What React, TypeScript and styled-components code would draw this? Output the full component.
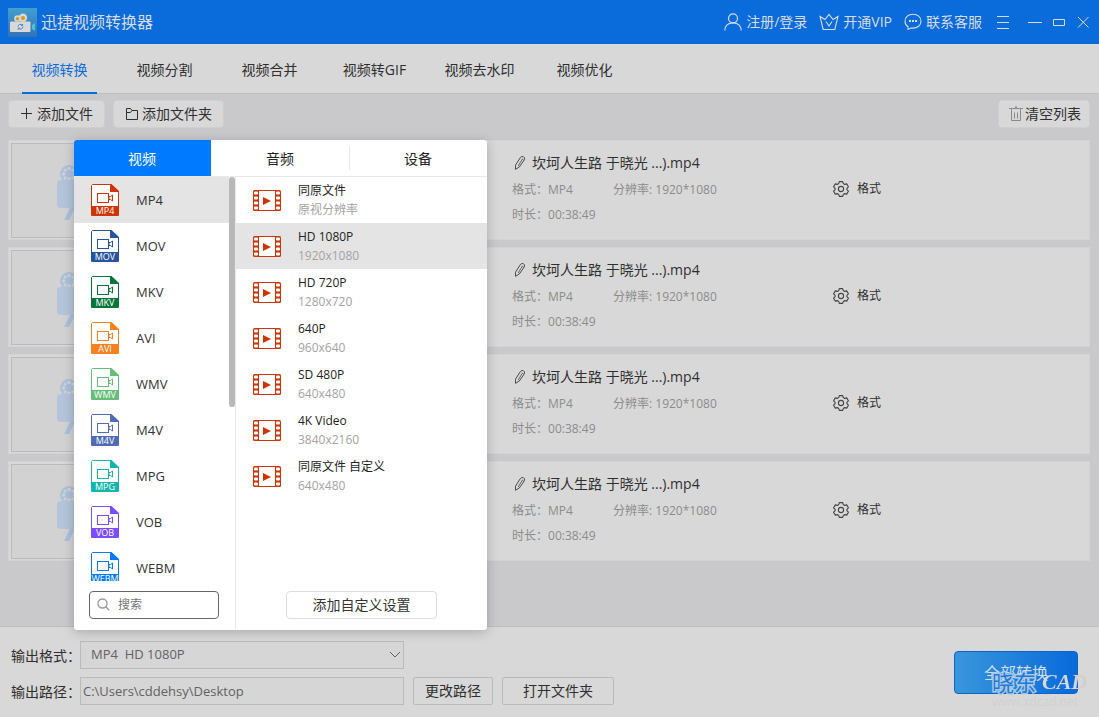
import React from "react";
import styled, { createGlobalStyle, css } from "styled-components";

const font = `"Open Sans", "Noto Sans CJK SC", sans-serif`;

const GlobalStyle = createGlobalStyle`
  *, *::before, *::after { box-sizing: border-box; }
  html, body, #root { height: 100%; }
  body { margin: 0; background: #c9c9cb; color: #2f2f2f; font-family: ${font}; font-size: 14px; line-height: 20px; }
  button, input, select { font: inherit; color: inherit; margin: 0; }
  button { cursor: pointer; padding: 0; border: 0; background: none; white-space: nowrap; }
  svg { display: block; flex: none; }
`;

const Window = styled.div`
  display: flex;
  flex-direction: column;
  min-height: 100vh;
`;

/* ---------- title bar ---------- */

const TitleBar = styled.header`
  display: flex;
  align-items: center;
  height: 44px;
  padding: 0 9px 0 8px;
  background: #096cda;
  color: #d8dbe0;
`;

const Brand = styled.h1`
  display: flex;
  align-items: center;
  gap: 4px;
  margin: 0 auto 0 0;
  font-size: 16px;
  font-weight: 400;
  line-height: 24px;
`;

const HeaderActions = styled.nav`
  display: flex;
  align-items: center;
  gap: 12px;
`;

const HeaderLink = styled.button`
  display: flex;
  align-items: center;
  gap: 4px;
`;

const WindowControls = styled.div`
  display: flex;
  align-items: center;
  gap: 10px;
  margin-left: 14px;
`;

const MenuControl = styled.button`
  margin-right: 8px;
`;

/* ---------- tabs and toolbar ---------- */

const Tabs = styled.nav`
  display: flex;
  height: 50px;
  padding-left: 7px;
  background: #d8d8d8;
  border-bottom: 1px solid #bebebf;
`;

const Tab = styled.button<{ $active?: boolean }>`
  width: 105px;
  height: 50px;
  padding-top: 2px;
  color: ${(p) => (p.$active ? "#0a6cda" : "inherit")};
  display: flex;
  flex-direction: column;
  align-items: center;
  justify-content: space-between;

  &::before { content: ""; height: 2px; }
  &::after {
    content: "";
    width: 75px;
    height: 2px;
    background: ${(p) => (p.$active ? "#0a6cda" : "transparent")};
  }
`;

const Toolbar = styled.div`
  display: flex;
  align-items: center;
  gap: 8px;
  padding: 6px 9px 12px 8px;
`;

const ToolButton = styled.button<{ $end?: boolean }>`
  display: flex;
  align-items: center;
  gap: ${(p) => (p.$end ? 2 : 4)}px;
  height: 28px;
  padding: 0 ${(p) => (p.$end ? 8 : 11)}px 0 ${(p) => (p.$end ? 10 : 12)}px;
  margin-left: ${(p) => (p.$end ? "auto" : "0")};
  border: 1px solid #cfcfd0;
  border-radius: 4px;
  background: #d8d8d8;
`;

/* ---------- file list ---------- */

const FileList = styled.ul`
  flex: 1;
  display: flex;
  flex-direction: column;
  gap: 7px;
  margin: 0;
  padding: 0 9px 16px 8px;
  list-style: none;
`;

const FileCard = styled.li`
  display: grid;
  grid-template-columns: 504px 321px 1fr;
  height: 100px;
  background: #d8d8d8;
  box-shadow: 0 0 0 1px #d3d3d4 inset;
`;

const Thumb = styled.div`
  display: flex;
  align-items: center;
  justify-content: center;
  width: 134px;
  height: 95px;
  margin: 3px;
  padding-top: 4px;
  border: 1px solid #bbbbbc;
  background: #d2d2d3;
`;

const FileInfo = styled.div`
  padding-top: 13px;
`;

const FileName = styled.h2`
  display: flex;
  align-items: center;
  gap: 5px;
  margin: 0 0 8px 1px;
  font-size: 14px;
  font-weight: 400;
  line-height: 20px;
`;

const Facts = styled.dl`
  display: grid;
  grid-template-columns: 101px 1fr;
  row-gap: 7px;
  margin: 0;
  color: #8c8c8c;
  font-size: 12px;
  line-height: 18px;
`;

const Fact = styled.div`
  display: flex;
  white-space: pre;
  dt, dd { margin: 0; }
`;

const FormatButton = styled.button`
  display: flex;
  align-items: center;
  gap: 8px;
  align-self: start;
  justify-self: start;
  margin-top: 39px;
  font-size: 12px;
`;

/* ---------- output bar ---------- */

const OutputBar = styled.footer`
  display: flex;
  justify-content: space-between;
  align-items: center;
  min-height: 91px;
  padding: 2px 21px 0 11px;
  background: #d8d8d8;
  border-top: 1px solid #bebebf;
`;

const OutputForm = styled.div`
  display: flex;
  flex-direction: column;
  gap: 8px;
`;

const OutputRow = styled.div`
  display: flex;
  align-items: center;
`;

const OutputLabel = styled.label`
  width: 69px;
  padding-top: 2px;
  white-space: nowrap;
`;

const Field = styled.div`
  position: relative;
  width: 324px;
  margin-right: 9px;
  color: #626262;
`;

const fieldBox = css`
  display: block;
  width: 100%;
  height: 28px;
  border: 1px solid #bbbbbb;
  border-radius: 0;
  background: #d6d6d6;
  font-size: 13px;
  outline: none;
`;

const FormatSelect = styled.select`
  ${fieldBox}
  appearance: none;
  padding: 0 24px 2px 10px;
`;

const PathInput = styled.input`
  ${fieldBox}
  padding: 0 2px;
`;

const SelectArrow = styled.span`
  position: absolute;
  right: 3px;
  top: 10px;
  pointer-events: none;
`;

const PathButton = styled.button`
  height: 28px;
  margin-right: 9px;
  padding: 0 11px;
  border: 1px solid #bbbbbb;
  border-radius: 2px;

  & + & { padding: 0 20px; }
`;

const ConvertArea = styled.div`
  position: relative;
`;

const ConvertButton = styled.button`
  display: block;
  width: 124px;
  height: 43px;
  margin-bottom: 1px;
  border: 1px solid #0c64c4;
  border-radius: 4px;
  background: linear-gradient(90deg, #3a96db, #0a6cda 95%);
  color: #d4dde6;
  font-size: 16px;
`;

const Watermark = styled.div`
  position: absolute;
  left: 38px;
  top: 18px;
  width: 96px;
  pointer-events: none;
  line-height: 26px;
  white-space: nowrap;
`;

const MarkLine = styled.div`
  display: flex;
  gap: 6px;
`;

const MarkName = styled.span`
  font-size: 22px;
  color: #1c7bda;
  -webkit-text-stroke: 3px #a9c8e6;
  paint-order: stroke fill;
`;

const MarkScript = styled.span`
  font-family: "Liberation Serif", serif;
  font-size: 22px;
  font-style: italic;
  font-weight: 700;
  background: linear-gradient(90deg, #d8d8d8 34px, #cfcfcf 34px);
  background-clip: text;
  -webkit-background-clip: text;
  color: transparent;
`;

const MarkUrl = styled.div`
  font-size: 12px;
  line-height: 14px;
  color: #d0d0d0;
`;

/* ---------- format popup ---------- */

const Popup = styled.section`
  position: absolute;
  z-index: 2;
  left: -6px;
  bottom: 39px;
  display: flex;
  flex-direction: column;
  width: 413px;
  height: 490px;
  border-radius: 3px;
  overflow: hidden;
  background: #ffffff;
  color: #333333;
  box-shadow: 0 2px 12px rgba(0, 0, 0, 0.22);
`;

const PopupTabs = styled.div`
  display: grid;
  grid-template-columns: 137px 139px 1fr;
  height: 37px;
  border-bottom: 1px solid #e8e8e8;
`;

const PopupTab = styled.button<{ $active?: boolean; $divided?: boolean }>`
  display: flex;
  align-items: center;
  background: ${(p) => (p.$active ? "#007bff" : "transparent")};
  color: ${(p) => (p.$active ? "#ffffff" : "#222222")};

  span {
    flex: 1;
    padding-top: 2px;
    line-height: 22px;
    border-right: 1px solid ${(p) => (p.$divided ? "#e8e8e8" : "transparent")};
  }
`;

const PopupBody = styled.div`
  flex: 1;
  display: grid;
  grid-template-columns: 162px 1fr;
  min-height: 0;
`;

const Pane = styled.div<{ $ruled?: boolean }>`
  display: flex;
  flex-direction: column;
  min-width: 0;
  min-height: 0;
  padding-bottom: 11px;
  border-right: ${(p) => (p.$ruled ? "1px solid #e8e8e8" : "0")};
`;

const PaneScroll = styled.div`
  display: flex;
  height: 404px;
  margin-bottom: 10px;
  overflow: hidden;
`;

const Options = styled.div`
  flex: 1;
  min-width: 0;
`;

const ScrollThumb = styled.div`
  width: 6px;
  height: 230px;
  border-radius: 3px;
  background: #b8b8b8;
`;

const Option = styled.button<{ $active?: boolean }>`
  display: flex;
  align-items: center;
  gap: 17px;
  width: 100%;
  height: 46px;
  padding-left: 17px;
  text-align: left;
  font-size: 13px;
  background: ${(p) => (p.$active ? "#e4e4e4" : "transparent")};
`;

const Preset = styled.span`
  display: flex;
  flex-direction: column;
  font-size: 12px;
  line-height: 19px;
  color: #222222;
  small { font-size: 12px; color: #a3a3a3; }
`;

const SearchBox = styled.label`
  display: flex;
  align-items: center;
  gap: 8px;
  width: 130px;
  height: 28px;
  margin-left: 15px;
  padding: 0 7px;
  border: 1px solid #666666;
  border-radius: 4px;

  input {
    flex: 1;
    min-width: 0;
    padding: 0;
    border: 0;
    outline: 0;
    background: none;
    font-size: 12px;
  }
  input::placeholder { color: #757575; opacity: 1; }
`;

const CustomButton = styled.button`
  align-self: center;
  width: 151px;
  height: 28px;
  border: 1px solid #dddddd;
  border-radius: 4px;
`;

/* ---------- drawings ---------- */

const AppLogo = () => (
  <svg width="29" height="29" viewBox="0 0 29 29" aria-hidden="true">
    <defs>
      <linearGradient id="logo" x1="0" y1="0" x2="0" y2="1">
        <stop offset="0" stopColor="#419fd0" />
        <stop offset="1" stopColor="#3271b9" />
      </linearGradient>
    </defs>
    <rect width="29" height="29" fill="url(#logo)" />
    <circle cx="9.5" cy="10.5" r="3.3" fill="#d8d8d8" />
    <circle cx="15" cy="9.8" r="4.2" fill="#d8d8d8" />
    <circle cx="9.5" cy="10.7" r="1.7" fill="#d79a1c" />
    <circle cx="15" cy="10" r="2" fill="#d79a1c" />
    <rect x="2" y="13.5" width="20.5" height="10.5" rx="1" fill="#d8d8d8" />
    <path d="M24 17l3-2v8l-3-2z" fill="#4cc5c9" />
    <path d="M10 18.700a2.400 2.400 0 0 1 4.300-1.400M14.800 18.600a2.400 2.400 0 0 1-4.300 1.600M14.600 16v1.500h-1.500M10.200 21.700v-1.500h1.500" fill="none" stroke="#3b7fbd" strokeWidth=".9" />
  </svg>
);

const UserIcon = () => (
  <svg width="18" height="18" viewBox="0 0 18 18" fill="none" stroke="currentColor" strokeWidth="1.2">
    <circle cx="9" cy="5.3" r="4.5" />
    <path d="M.8 17.5C1 12.500 4.500 9.800 9 9.800s8 2.700 8.200 7.700" />
  </svg>
);

const CrownIcon = () => (
  <svg width="20" height="18" viewBox="0 0 20 18" fill="none" stroke="currentColor" strokeWidth="1.1">
    <path d="M4.200 16.500L1 3.500l5 3L10 1.500l4 5 5-3-3.200 13z" />
    <path d="M7 8.500l3 4.500 3-4.500" />
  </svg>
);

const ChatIcon = () => (
  <svg width="18" height="18" viewBox="0 0 18 18" fill="none" stroke="currentColor" strokeWidth="1.100">
    <path d="M4 16.500v-2.700C2 12.600 1 10.400 1 8.200 1 4 4.500 1.200 9 1.200s8 2.800 8 7-3.500 6.900-8 6.900H7z" />
    <g fill="currentColor" stroke="none">
      <rect x="5" y="7" width="2" height="2" />
      <rect x="8" y="7" width="2" height="2" />
      <rect x="11" y="7" width="2" height="2" />
    </g>
  </svg>
);

const LineIcon = ({ d, w = 14, h = 14 }: { d: string; w?: number; h?: number }) => (
  <svg width={w} height={h} viewBox={`0 0 ${w} ${h}`} fill="none" stroke="currentColor" aria-hidden="true">
    <path d={d} />
  </svg>
);

const FolderIcon = () => (
  <svg width="12" height="16" viewBox="0 0 12 16" fill="none" stroke="currentColor">
    <path d="M.5 13.500v-11h4l1.500 2h5.500v9z" />
    <path d="M.5 6.500h4l1.500-2" />
  </svg>
);

const TrashIcon = () => (
  <svg width="14" height="16" viewBox="0 0 14 16" fill="none" stroke="#8b8b8b">
    <path d="M0 2.500h14M2.500 3v11.500h9V3M5.500 6.500v6M8.500 6.500v6" />
    <path d="M6 1.500h2" strokeWidth="2" />
  </svg>
);

const PencilIcon = () => (
  <svg width="14" height="16" viewBox="0 0 14 16" fill="none" stroke="#4a4a4a">
    <path d="M2.500 14.300V10.200L7.300 2.600Q8.700.9 10.400 1.700t1 3L6.300 12z" />
    <path d="M8.600 4.300q1.500-.6 2 1.200M8.800 5L5.200 11" strokeWidth=".8" />
  </svg>
);

const GearIcon = () => (
  <svg width="16" height="16" viewBox="0 0 16 16" fill="none" stroke="#444444" strokeWidth="1.100" strokeLinejoin="round">
    <path d="M6.300.6h3.400l.6 2 1.400.8 2-.5 1.700 2.900-1.500 1.500v1.400l1.500 1.500-1.700 2.900-2-.5-1.400.8-.6 2H6.300l-.6-2-1.400-.8-2 .5L.6 10.200l1.500-1.500V7.300L.6 5.800l1.700-2.900 2 .5 1.400-.8z" />
    <circle cx="8" cy="8" r="2.600" />
  </svg>
);

const CameraArt = () => (
  <svg width="42" height="56" viewBox="0 0 42 56" fill="#abc0dc" aria-hidden="true">
    {[12, 30].map((cx) => (
      <g key={cx}>
        <circle cx={cx} cy="9" r="9" />
        <g fill="#d2d2d3">
          <circle cx={cx} cy="3.500" r="1.700" />
          <circle cx={cx} cy="14" r="1.700" />
          <circle cx={cx - 5.4} cy="9" r="1.700" />
          <circle cx={cx + 5.4} cy="9" r="1.700" />
          <circle cx={cx - 3.9} cy="5.100" r="1.600" />
          <circle cx={cx + 3.9} cy="5.100" r="1.600" />
          <circle cx={cx - 3.9} cy="12.900" r="1.600" />
          <circle cx={cx + 3.9} cy="12.900" r="1.600" />
        </g>
      </g>
    ))}
    <rect x="0" y="15" width="42" height="28" rx="4" fill="#b4c4da" />
    <path d="M13 43h5l-6 12H7zM29 43h-5l6 12h5z" />
  </svg>
);

const FormatIcon = ({ name, color }: { name: string; color: string }) => (
  <svg width="28" height="32" viewBox="0 0 28 32" aria-hidden="true">
    <path d="M1.500.5h18l8 7.500v23h-27V1.500z" fill="#fff" stroke={color} />
    <path d="M19 0h1.500L28 7v1h-9z" fill={color} />
    <path d="M0 22h28v8.500q0 1.500-1.500 1.500h-25Q0 32 0 30.500z" fill={color} />
    <rect x="6.500" y="9.500" width="11" height="9" fill="none" stroke={color} />
    <path d="M18 12.500h1.500l2-1.500v6l-2-1.500H18z" fill="none" stroke={color} />
    <text x="14" y="30" textAnchor="middle" fontSize="9" fill="#fff" fontFamily={font}>
      {name}
    </text>
  </svg>
);

const FilmIcon = () => (
  <svg width="28" height="21" viewBox="0 0 28 21" aria-hidden="true">
    <rect width="28" height="21" rx="1.500" fill="#cf3404" />
    <rect x="6" y="1" width="16" height="19" fill="#fff" />
    {[1, 6, 11, 16].map((y) => (
      <g key={y} fill="#fff">
        <rect x="1" y={y + 0.5} width="4" height="3" rx="1" />
        <rect x="23" y={y + 0.5} width="4" height="3" rx="1" />
      </g>
    ))}
    <path d="M10 7l8 4-8 4z" fill="#cf3404" />
  </svg>
);

const SearchIcon = () => (
  <svg width="13" height="15" viewBox="0 0 13 15" fill="none" stroke="#999999" strokeWidth="1.400">
    <circle cx="5.500" cy="5.500" r="4.500" />
    <path d="M8.800 8.800l3.400 3.400" />
  </svg>
);

/* ---------- data ---------- */

const tabs = ["视频转换", "视频分割", "视频合并", "视频转GIF", "视频去水印", "视频优化"];

const formats = [
  ["MP4", "#cf3404"],
  ["MOV", "#27559b"],
  ["MKV", "#04763a"],
  ["AVI", "#f5821f"],
  ["WMV", "#66bd79"],
  ["M4V", "#4f6cb5"],
  ["MPG", "#15b5ab"],
  ["VOB", "#7c4dff"],
  ["WEBM", "#007bff"],
];

const presets = [
  ["同原文件", "原视分辨率"],
  ["HD 1080P", "1920x1080"],
  ["HD 720P", "1280x720"],
  ["640P", "960x640"],
  ["SD 480P", "640x480"],
  ["4K Video", "3840x2160"],
  ["同原文件 自定义", "640x480"],
];

const files = [1, 2, 3, 4];

/* ---------- page ---------- */

const FormatPopup = () => (
  <Popup aria-label="输出格式">
    <PopupTabs>
      <PopupTab $active><span>视频</span></PopupTab>
      <PopupTab $divided><span>音频</span></PopupTab>
      <PopupTab><span>设备</span></PopupTab>
    </PopupTabs>
    <PopupBody>
      <Pane $ruled>
        <PaneScroll>
          <Options>
            {formats.map(([name, color], i) => (
              <Option key={name} $active={i === 0}>
                <FormatIcon name={name} color={color} />
                {name}
              </Option>
            ))}
          </Options>
          <ScrollThumb />
        </PaneScroll>
        <SearchBox>
          <SearchIcon />
          <input type="text" placeholder="搜索" aria-label="搜索" />
        </SearchBox>
      </Pane>
      <Pane>
        <PaneScroll>
          <Options>
            {presets.map(([name, size], i) => (
              <Option key={name} $active={i === 1}>
                <FilmIcon />
                <Preset>
                  {name}
                  <small>{size}</small>
                </Preset>
              </Option>
            ))}
          </Options>
        </PaneScroll>
        <CustomButton>添加自定义设置</CustomButton>
      </Pane>
    </PopupBody>
  </Popup>
);

export default function App() {
  return (
    <Window>
      <GlobalStyle />
      <TitleBar>
        <Brand><AppLogo />迅捷视频转换器</Brand>
        <HeaderActions>
          <HeaderLink><UserIcon />注册/登录</HeaderLink>
          <HeaderLink><CrownIcon />开通VIP</HeaderLink>
          <HeaderLink><ChatIcon />联系客服</HeaderLink>
        </HeaderActions>
        <WindowControls>
          <MenuControl aria-label="菜单"><LineIcon d="M1 1.500h12M1 7.500h12M1 13.500h12" h={15} /></MenuControl>
          <button aria-label="最小化"><LineIcon d="M0 7.500h14" /></button>
          <button aria-label="最大化"><LineIcon d="M1.500 4.500h11v6h-11z" /></button>
          <button aria-label="关闭"><LineIcon d="M2 2l10.500 10.500M12.500 2L2 12.500" /></button>
        </WindowControls>
      </TitleBar>

      <Tabs>
        {tabs.map((t, i) => <Tab key={t} $active={i === 0}>{t}</Tab>)}
      </Tabs>

      <Toolbar>
        <ToolButton><LineIcon d="M0 5.500h11M5.500 0v11" w={12} h={12} />添加文件</ToolButton>
        <ToolButton><FolderIcon />添加文件夹</ToolButton>
        <ToolButton $end><TrashIcon />清空列表</ToolButton>
      </Toolbar>

      <FileList>
        {files.map((id) => (
          <FileCard key={id}>
            <Thumb><CameraArt /></Thumb>
            <FileInfo>
              <FileName><PencilIcon />坎坷人生路 于晓光 ...).mp4</FileName>
              <Facts>
                <Fact><dt>格式：</dt><dd>MP4</dd></Fact>
                <Fact><dt>分辨率: </dt><dd>1920*1080</dd></Fact>
                <Fact><dt>时长：</dt><dd>00:38:49</dd></Fact>
              </Facts>
            </FileInfo>
            <FormatButton><GearIcon />格式</FormatButton>
          </FileCard>
        ))}
      </FileList>

      <OutputBar>
        <OutputForm>
          <OutputRow>
            <OutputLabel htmlFor="format">输出格式：</OutputLabel>
            <Field>
              <FormatSelect id="format">
                <option>{"MP4\u00a0\u00a0HD 1080P"}</option>
              </FormatSelect>
              <SelectArrow><LineIcon d="M1 1l5 5 5-5" w={12} h={8} /></SelectArrow>
              <FormatPopup />
            </Field>
          </OutputRow>
          <OutputRow>
            <OutputLabel htmlFor="path">输出路径：</OutputLabel>
            <Field>
              <PathInput id="path" type="text" defaultValue={"C:\\Users\\cddehsy\\Desktop"} />
            </Field>
            <PathButton>更改路径</PathButton>
            <PathButton>打开文件夹</PathButton>
          </OutputRow>
        </OutputForm>
        <ConvertArea>
          <ConvertButton>全部转换</ConvertButton>
          <Watermark aria-hidden="true">
            <MarkLine>
              <MarkName>晓东</MarkName>
              <MarkScript>CAD</MarkScript>
            </MarkLine>
            <MarkUrl>www.xdcad.net</MarkUrl>
          </Watermark>
        </ConvertArea>
      </OutputBar>
    </Window>
  );
}
